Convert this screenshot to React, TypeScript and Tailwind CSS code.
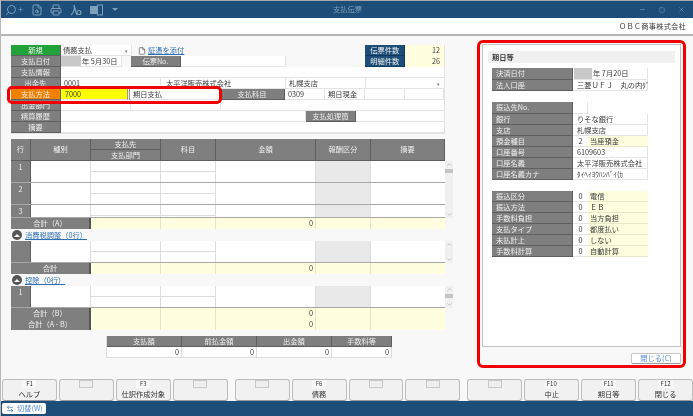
import React from "react";
import { Search, Plus, FileSearch, Printer, ArrowLeftRight, File, ChevronUp, ChevronDown, Minus, Square, X } from "lucide-react";

const L = ({ w, children, className = "" }: { w?: string; children?: React.ReactNode; className?: string }) => (
  <div className={`h-full flex items-center justify-center bg-[#7f7f7f] text-[#eeeeee] border-r border-b border-[#5f5f5f] shrink-0 whitespace-nowrap ${w ?? ""} ${className}`}>{children}</div>
);
const V = ({ w, children, className = "" }: { w?: string; children?: React.ReactNode; className?: string }) => (
  <div className={`h-full flex items-center px-[3px] bg-white border-r border-b border-[#e4e4e4] shrink-0 whitespace-nowrap ${w ?? ""} ${className}`}>{children}</div>
);
const Row = ({ label, children, color = "bg-[#7f7f7f]" }: { label: string; children?: React.ReactNode; color?: string }) => (
  <div className="flex h-[11px]">
    <div className={`w-[50px] h-full flex items-center justify-center text-[#eeeeee] border-r border-b border-[#5f5f5f] shrink-0 ${color}`}>{label}</div>
    {children}
  </div>
);
const Caret = () => <span className="ml-auto mr-[1px] text-[#777] text-[5px]">▾</span>;

const Head = () => (
  <div className="grid grid-cols-[20px_60px_70px_55px_100px_55px_74px] h-[22px] w-[434px] text-[#eeeeee]">
    <L className="!h-[22px]">行</L>
    <L className="!h-[22px]">種別</L>
    <div className="flex flex-col">
      <L className="!h-[11px]">支払先</L>
      <L className="!h-[11px]">支払部門</L>
    </div>
    <L className="!h-[22px]">科目</L>
    <L className="!h-[22px]">金額</L>
    <L className="!h-[22px]">報酬区分</L>
    <L className="!h-[22px]">摘要</L>
  </div>
);

const Detail = ({ n, h = "h-[22px]", half = "h-[11px]" }: { n?: string; h?: string; half?: string }) => (
  <div className={`grid grid-cols-[20px_60px_70px_55px_100px_55px_74px] w-[434px] border-b border-[#a8a8a8] overflow-hidden ${h}`}>
    <div className="bg-[#7f7f7f] text-[#eeeeee] text-center border-r border-[#5f5f5f] pt-[1px]">{n}</div>
    <div className="bg-white border-r border-[#ddd]" />
    <div className="bg-white border-r border-[#ddd]">
      <div className={`${half} border-b border-[#ddd]`} />
    </div>
    <div className="bg-white border-r border-[#ddd]">
      <div className={`${half} border-b border-[#ddd]`} />
    </div>
    <div className="bg-white border-r border-[#ddd]" />
    <div className="bg-[#e9e9e9] border-r border-[#ddd]" />
    <div className="bg-white" />
  </div>
);

const Scroll = ({ thumb = "mt-[1px]", h }: { thumb?: string; h: string }) => (
  <div className={`w-[8px] bg-[#f0f0f0] flex flex-col items-center justify-between ${h}`}>
    <ChevronUp size={7} color="#aaa" />
    <div className={`w-[8px] h-[4px] bg-[#c4c4c4] ${thumb}`} />
    <div className="flex-1" />
    <ChevronDown size={7} color="#aaa" />
  </div>
);

const Total = ({ label, value, dark = true }: { label: string; value?: string; dark?: boolean }) => (
  <div className={`grid grid-cols-[80px_70px_55px_100px_55px_74px] h-[11px] w-[434px] border-b ${dark ? "border-[#8f8f80]" : "border-[#e4e4d0]"}`}>
    <div className="bg-[#7f7f7f] text-[#eeeeee] flex items-center justify-center border-r-2 border-[#555]">{label}</div>
    <div className="bg-[#ffffe0] border-r border-[#e4e4d0]" />
    <div className="bg-[#ffffe0] border-r border-[#e4e4d0]" />
    <div className="bg-[#ffffe0] border-r border-[#e4e4d0] text-right pr-[2px] leading-[11px]">{value}</div>
    <div className="bg-[#ffffe0] border-r border-[#e4e4d0]" />
    <div className="bg-[#ffffe0]" />
  </div>
);

const Section = ({ label }: { label: string }) => (
  <div className="h-[12px] flex items-center gap-[3px] pl-[1px]">
    <span className="w-[10px] h-[10px] rounded-full bg-[#555] flex items-center justify-center">
      <span className="w-0 h-0 border-x-[3px] border-x-transparent border-b-[3px] border-b-white" />
    </span>
    <span className="text-[#2f6fb3] underline">{label}</span>
  </div>
);

const PL = ({ children }: { children: React.ReactNode }) => (
  <L w="w-[81px]" className="!justify-start pl-[4px]">{children}</L>
);
const PanelRow = ({ label, value }: { label: string; value?: string }) => (
  <div className="flex h-[11px]">
    <PL>{label}</PL>
    <V w="w-[75px]" className="!px-[4px]">{value}</V>
  </div>
);
const CodeRow = ({ label, code, value }: { label: string; code: string; value: string }) => (
  <div className="flex h-[11px]">
    <PL>{label}</PL>
    <div className="w-[15px] h-full bg-white border-b border-[#e4e4e4] text-center leading-[11px]">{code}</div>
    <div className="w-[60px] h-full bg-[#ffffe0] border-b border-[#e8e8c8] px-[2px] leading-[11px] whitespace-nowrap">{value}</div>
  </div>
);

const FKey = ({ k, label }: { k?: string; label?: string }) => (
  <div className="w-[55px] h-[22px] rounded-[3px] border border-[#bdbdbd] border-b-[#999] bg-[#f1f1f1] flex flex-col items-center text-[#333]">
    <div className={`w-[14px] h-[8px] text-[6px] leading-[8px] text-center ${k ? "bg-[#f8f8f8]" : "border border-[#c8c8c8] bg-[#eeeeee]"}`}>{k}</div>
    <div className="text-[7.25px] leading-[13px] whitespace-nowrap">{label}</div>
  </div>
);

export default function App() {
  const icon = "#7f9fbb";
  return (
    <div className="relative w-[693px] h-[416px] overflow-hidden flex flex-col bg-[#f8f8f8] text-[7.25px] leading-[11px] text-[#3a3a3a] border-l border-[#b8b8b8] blur-[0.35px]" style={{ fontFamily: '"Noto Sans CJK JP", "Liberation Sans", sans-serif' }}>
      <div className="h-[1px] bg-[#a8a8a8] shrink-0" />
      <div className="h-[17px] bg-[#1d4e79] shrink-0 flex items-center relative text-[#7f9fbb]">
        <div className="flex items-center pl-[4px] w-[250px]">
          <span className="flex items-center w-[26px]"><Search size={12} color={icon} className="-scale-x-100" /><Plus size={7} color={icon} /></span>
          <span className="w-[19px]"><FileSearch size={12} color={icon} /></span>
          <span className="w-[20px]"><Printer size={12} color={icon} /></span>
          <svg width="20" height="12" viewBox="0 0 20 12" fill="none" stroke={icon} strokeWidth="1.2"><path d="M1 11C4 9 5 4 4 1 5 4 6 9 7 11" /><circle cx="9" cy="8.5" r="2" /></svg>
          <svg width="22" height="12" viewBox="0 0 22 12" fill={icon}><rect x="0" y="2" width="7" height="8" /><rect x="7.5" y="1" width="5" height="10" fill="none" stroke={icon} /></svg>
          <span className="w-0 h-0 border-x-[3px] border-x-transparent border-t-[3px] border-t-[#7f9fbb]" />
        </div>
        <div className="absolute left-[332px]">支払伝票</div>
        <div className="ml-auto flex items-center gap-[13px] pr-[8px]">
          <Minus size={7} color={icon} />
          <Square size={6} color={icon} />
          <X size={7} color={icon} />
        </div>
      </div>
      <div className="h-[18px] bg-white border-b-2 border-[#b4b4b4] shrink-0 flex items-center justify-end pr-[7px] tracking-[0.2px]">ＯＢＣ商事株式会社</div>

      <div className="flex-1 flex pl-[10px] pt-[8px] min-h-0">
        <div className="w-[443px] shrink-0">
          <div className="w-[434px] mt-[1px] border-r border-b border-[#e4e4e4]">
            <Row label="新規" color="bg-[#22a33a]">
              <V w="w-[71px]" className="!px-[2px]">債務支払<Caret /></V>
              <div className="w-[234px] flex items-center pl-[6px] gap-[2px]">
                <File size={8} color="#555" />
                <span className="text-[#2f6fb3] underline">証憑を添付</span>
              </div>
              <L w="w-[40px]" className="!bg-[#1d4e79] !border-[#123a5c]">伝票件数</L>
              <div className="w-[39px] bg-[#ffffe0] text-right pr-[4px]">12</div>
            </Row>
            <Row label="支払日付">
              <V w="w-[61px]" className="!px-0">
                <span className="w-[20px] h-full bg-[#c8c8c8] mr-[1px]" />年 5月30日
              </V>
              <div className="w-[9px]" />
              <L w="w-[50px]">伝票No.</L>
              <V w="w-[105px]" />
              <div className="w-[80px]" />
              <L w="w-[40px]" className="!bg-[#1d4e79] !border-[#123a5c]">明細件数</L>
              <div className="w-[39px] bg-[#ffffe0] text-right pr-[4px]">26</div>
            </Row>
            <Row label="支払情報"><V w="w-[384px]" /></Row>
            <Row label="出金先">
              <V w="w-[100px]">0001</V>
              <V w="w-[125px]" className="!px-[5px]">太平洋販売株式会社</V>
              <V w="w-[80px]">札幌支店</V>
              <V w="w-[79px]"><Caret /></V>
            </Row>
            <Row label="支払方法" color="bg-[#f08000]">
              <div className="w-[67px] h-full bg-[#ffff00] px-[4px] flex items-center border-b border-[#e4e4e4]">7000</div>
              <div className="w-[3px] h-full bg-[#e8e8e8] border-x border-[#999]" />
              <V w="w-[90px]" className="!px-[3px]">期日支払</V>
              <L w="w-[65px]">支払科目</L>
              <V w="w-[40px]" className="!px-[3px]">0309</V>
              <V w="w-[40px]">期日現金</V>
              <V w="w-[40px]" />
              <V w="w-[39px]" />
            </Row>
            <Row label="出金部門">
              <V w="w-[70px]" />
              <V w="w-[90px]" />
              <V w="w-[224px]" />
            </Row>
            <Row label="精算履歴">
              <V w="w-[245px]" />
              <L w="w-[50px]">支払処理簡</L>
              <V w="w-[89px]" />
            </Row>
            <Row label="摘要"><V w="w-[384px]" /></Row>
          </div>

          <div className="mt-[5px]">
            <Head />
            <div className="flex">
              <div className="w-[434px]">
                <Detail n="1" />
                <Detail n="2" />
                <Detail n="3" h="h-[13px]" />
              </div>
              <Scroll h="h-[57px]" />
            </div>
            <Total label="合計（A）" value="0" />
            <Section label="消費税調整（0行）" />
            <div className="flex">
              <Detail />
              <Scroll h="h-[22px]" thumb="hidden" />
            </div>
            <Total label="合計" value="0" />
            <Section label="控除（0行）" />
            <div className="flex">
              <Detail n="1" />
              <Scroll h="h-[22px]" />
            </div>
            <Total label="合計（B）" value="0" dark={false} />
            <Total label="合計（A - B）" value="0" dark={false} />
          </div>

          <div className="mt-[6px] ml-[95px] grid grid-cols-[75px_75px_75px_60px] w-[285px] border-l border-[#ddd]">
            {["支払額", "前払金額", "出金額", "手数料等"].map((t) => (
              <L key={t} className="!h-[11px]">{t}</L>
            ))}
            {["0", "0", "0", "0"].map((t, i) => (
              <div key={i} className="h-[11px] bg-white border-r border-b border-[#ddd] text-right pr-[2px]">{t}</div>
            ))}
          </div>
        </div>

        <div className="ml-[28px] w-[199px] flex flex-col">
          <div className="h-[303px] bg-white border border-[#c4c4c4] px-[5px] pt-[6px]">
            <div className="h-[12px] bg-[#f0f0f0] pl-[4px] font-bold leading-[12px]">期日等</div>
            <div className="px-[4px] pt-[5px]">
              <div className="flex h-[12px]">
                <PL>決済日付</PL>
                <V w="w-[75px]" className="!px-[1px]"><span className="w-[18px] h-full bg-[#c8c8c8] mr-[1px]" />年 7月20日</V>
              </div>
              <PanelRow label="法人口座" value="三菱ＵＦＪ　丸の内ﾀﾞ" />
              <div className="h-[11px]" />
              <div className="flex h-[12px]">
                <PL>振込先No.</PL>
                <V w="w-[15px]" />
              </div>
              <PanelRow label="銀行" value="りそな銀行" />
              <PanelRow label="支店" value="札幌支店" />
              <CodeRow label="預金種目" code="2" value="当座預金" />
              <PanelRow label="口座番号" value="6109603" />
              <PanelRow label="口座名義" value="太平洋販売株式会社" />
              <PanelRow label="口座名義カナ" value="ﾀｲﾍｲﾖｳﾊﾝﾊﾞｲ(ｶ" />
              <div className="h-[11px]" />
              <CodeRow label="振込区分" code="0" value="電信" />
              <CodeRow label="振込方法" code="0" value="ＥＢ" />
              <CodeRow label="手数料負担" code="0" value="当方負担" />
              <CodeRow label="支払タイプ" code="0" value="都度払い" />
              <CodeRow label="未払計上" code="0" value="しない" />
              <CodeRow label="手数料計算" code="0" value="自動計算" />
            </div>
          </div>
          <div className="mt-[6px] self-end w-[50px] h-[11px] bg-white border border-[#c4c4c4] border-b-[#999] rounded-[2px] text-center text-[#5a8fd8] leading-[9px]">閉じる(C)</div>
        </div>
      </div>

      <div className="h-[23px] shrink-0 flex pl-[1px] pt-[1px] gap-[2px] items-start">
        <FKey k="F1" label="ヘルプ" />
        <FKey />
        <FKey k="F3" label="仕訳作成対象" />
        <FKey />
        <div className="w-[3px]" />
        <FKey />
        <FKey k="F6" label="債務" />
        <FKey />
        <FKey />
        <div className="w-[3px]" />
        <FKey />
        <FKey k="F10" label="中止" />
        <FKey k="F11" label="期日等" />
        <FKey k="F12" label="閉じる" />
      </div>
      <div className="h-[15px] bg-[#1d4e79] shrink-0 flex items-center pl-[1px] relative">
        <div className="w-[44px] h-[11px] bg-white rounded-[2px] flex items-center pl-[4px] gap-[3px] text-[#5a8fd8]">
          <ArrowLeftRight size={8} color="#2f6fb3" />切替(W)
        </div>
      </div>

      <div className="absolute left-[6px] top-[86px] w-[215px] h-[18px] border-[3px] border-[#f00000] rounded-[5px] pointer-events-none" />
      <div className="absolute left-[476px] top-[40px] w-[209px] h-[328px] border-[3px] border-[#f00000] rounded-[6px] pointer-events-none" />
    </div>
  );
}
